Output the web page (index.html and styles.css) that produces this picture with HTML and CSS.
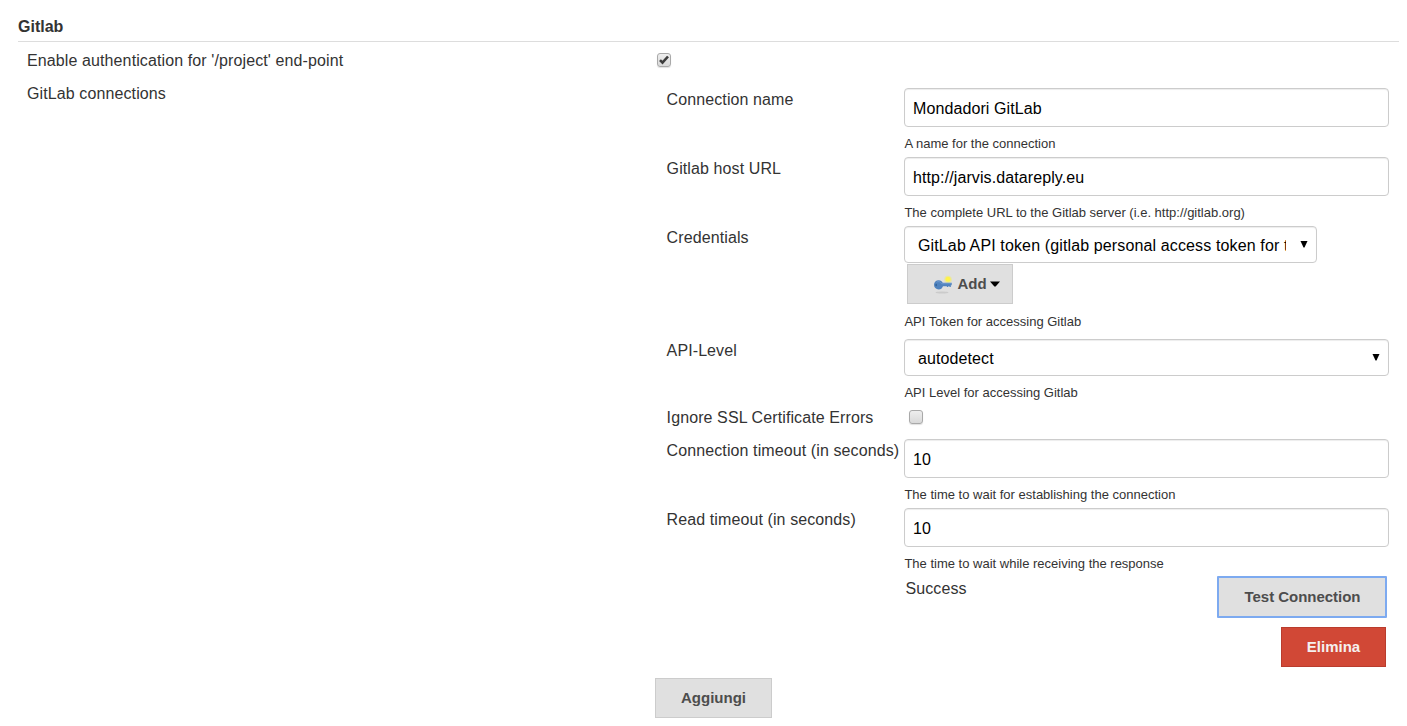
FILE: index.html
```html
<!DOCTYPE html>
<html lang="it">
<head>
<meta charset="utf-8">
<title>Gitlab</title>
<link rel="stylesheet" href="styles.css">
</head>
<body>
<form class="config">
  <h1 class="section-title">Gitlab</h1>
  <div class="setting">
    <span class="setting-name">Enable authentication for '/project' end-point</span>
    <span class="check check-main"><svg width="14" height="14" viewBox="0 0 14 14"><path d="M3 7.200 5.500 9.700 11 3.500" fill="none" stroke="#3c3c3c" stroke-width="2.600"/></svg></span>
  </div>
  <div class="setting">
    <span class="setting-name">GitLab connections</span>
    <div class="connections">
      <div class="connection">
        <div class="row">
          <span class="label">Connection name</span>
          <div class="field"><div class="input">Mondadori GitLab</div><p class="hint">A name for the connection</p></div>
        </div>
        <div class="row">
          <span class="label">Gitlab host URL</span>
          <div class="field"><div class="input">http://jarvis.datareply.eu</div><p class="hint">The complete URL to the Gitlab server (i.e. http://gitlab.org)</p></div>
        </div>
        <div class="row row-credentials">
          <span class="label">Credentials</span>
          <div class="field">
            <div class="select select-credentials"><span class="select-text">GitLab API token (gitlab personal access token for t</span><svg class="arrow" width="8" height="8" viewBox="0 0 8 8"><path d="M.5 1h7L4.500 7.500h-1z"/></svg></div>
            <div class="button button-add">
              <svg class="key" width="20" height="20" viewBox="0 0 20 20">
                <ellipse cx="9" cy="18.500" rx="6.500" ry="1" fill="#cbcbcb"/>
                <circle cx="15" cy="5.500" r="3.800" fill="#eeea85" opacity=".65"/>
                <circle cx="15" cy="5.300" r="2.500" fill="#fff34a"/>
                <path d="M5.700 6.200c2 0 3.300 1 4 2.600H18.700v2.500H17.800v1.700H16.500V12.200H15.200V13H13.900V12.200H10c-.7 2-2.200 3.300-4.300 3.300C3 15.500 1 13.500 1 10.800S3 6.200 5.700 6.200z" fill="#4f82be"/>
                <path d="M3.500 8.200c1.800-1.300 4-.5 5 1.500H18" fill="none" stroke="#6f9ad0" stroke-width=".9"/>
                <ellipse cx="3.200" cy="11" rx=".8" ry="1.300" fill="#346397"/>
              </svg>
              <span>Add</span>
              <svg class="caret" width="10" height="6" viewBox="0 0 10 6"><path d="M0 .5h10L5.600 5.500H4.400z"/></svg>
            </div>
            <p class="hint">API Token for accessing Gitlab</p>
          </div>
        </div>
        <div class="row row-level">
          <span class="label">API-Level</span>
          <div class="field">
            <div class="select"><span class="select-text">autodetect</span><svg class="arrow" width="8" height="8" viewBox="0 0 8 8"><path d="M.5 1h7L4.500 7.500h-1z"/></svg></div>
            <p class="hint">API Level for accessing Gitlab</p>
          </div>
        </div>
        <div class="row row-ssl">
          <span class="label">Ignore SSL Certificate Errors</span>
          <div class="field"><span class="check check-ssl"></span></div>
        </div>
        <div class="row">
          <span class="label">Connection timeout (in seconds)</span>
          <div class="field"><div class="input">10</div><p class="hint">The time to wait for establishing the connection</p></div>
        </div>
        <div class="row">
          <span class="label">Read timeout (in seconds)</span>
          <div class="field"><div class="input">10</div><p class="hint">The time to wait while receiving the response</p></div>
        </div>
        <div class="actions">
          <span class="status">Success</span>
          <div class="button button-test"><span>Test Connection</span></div>
        </div>
        <div class="actions actions-delete">
          <div class="button button-delete"><span>Elimina</span></div>
        </div>
      </div>
      <div class="button button-append"><span>Aggiungi</span></div>
    </div>
  </div>
</form>
</body>
</html>
```
FILE: styles.css
```css
* { box-sizing: border-box; }
body {
  margin: 0;
  height: 726px;
  overflow: hidden;
  background: #fff;
  color: #333;
  font: 16px/22px "Liberation Sans", Arial, sans-serif;
}
.config { padding: 15px 8px 0 18px; }
.section-title {
  margin: 0 0 8px;
  height: 27px;
  border-bottom: 1px solid #ddd;
  font-size: 16px;
  line-height: 24px;
}
.setting {
  display: grid;
  grid-template-columns: 637px 1fr;
  min-height: 33px;
}
.setting-name { padding-left: 9px; white-space: nowrap; letter-spacing: .11px; }
.check {
  display: block;
  width: 14px;
  height: 14px;
  border: 1px solid #a9a9a9;
  border-radius: 3px;
  background: linear-gradient(#eee, #d9d9d9);
  box-shadow: 0 1px 1px rgba(0, 0, 0, .12);
}
.check svg { display: block; margin: -1px; }
.check-main { margin: 3px 0 0 2px; }
.check-ssl { margin: 2px 0 0 5px; }
.connections { padding-top: 5px; }
.connection { padding: 0 10px 0 12px; }
.row {
  display: grid;
  grid-template-columns: 237px 485px;
  height: 69px;
}
.row-credentials { height: 113px; }
.row-ssl { height: 31px; }
.label {
  margin-left: -.4px;
  line-height: 24px;
  white-space: nowrap;
  letter-spacing: .1px;
}
.row-ssl .label { line-height: 20px; }
.input, .select {
  width: 485px;
  height: 39px;
  border: 1px solid #ccc;
  border-radius: 4px;
  box-shadow: inset 0 1px 1px rgba(0, 0, 0, .075);
  color: #000;
  line-height: 39px;
  padding-left: 8px;
  letter-spacing: .1px;
  white-space: nowrap;
}
.select {
  display: flex;
  align-items: center;
  height: 37px;
  padding: 0 8px 0 13px;
  line-height: 35px;
}
.select-credentials { width: 413px; }
.select-text { flex: 1; overflow: hidden; margin-right: 14px; padding-top: 2px; }
.select-credentials .select-text { letter-spacing: .13px; }
.arrow { flex: none; margin-bottom: 1px; }
.hint {
  margin: 7px 0 0;
  font-size: 13px;
  line-height: 20px;
  white-space: nowrap;
  padding-left: .4px;
}
.row-credentials .hint { margin-top: 8px; }
.button {
  display: flex;
  align-items: center;
  justify-content: center;
  height: 40px;
  border: 1px solid #ccc;
  background: #e0e0e0;
  color: #4d4d4d;
  font-size: 15px;
  font-weight: bold;
  white-space: nowrap;
}
.button-add { width: 106px; margin: 1px 0 0 3px; justify-content: flex-start; padding-left: 25px; }
.key { margin-right: 4.5px; }
.caret { margin-left: 3.5px; fill: #000; }
.actions { display: flex; justify-content: space-between; height: 50px; }
.status { padding-left: 238.5px; line-height: 24px; letter-spacing: .1px; }
.button-test { width: 170px; height: 42px; margin: -1px 2px 0 0; border: 2px solid #7daaf0; border-radius: 1px; }
.button-test span { padding-left: 1px; letter-spacing: -.03px; }
.actions-delete { justify-content: flex-end; height: 51px; }
.button-delete { width: 105px; margin-right: 3px; border-color: #b93c2d; background: #d14836; color: #f5f0ef; }
.button-append { width: 117px; }
```
